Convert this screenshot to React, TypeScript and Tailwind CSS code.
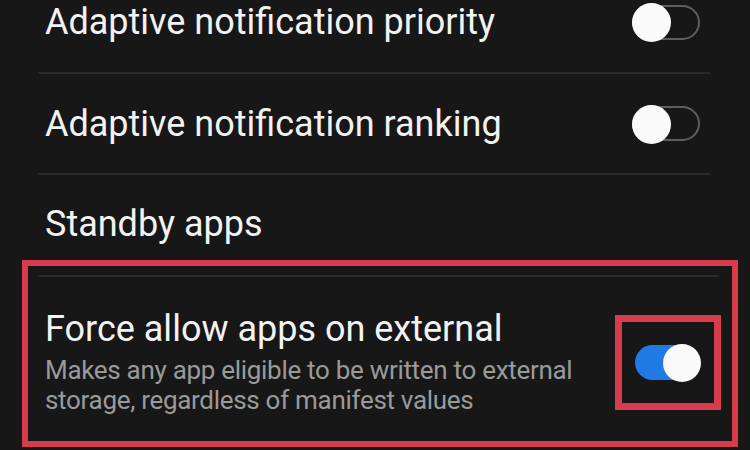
import React from 'react';

const Toggle: React.FC<{ on?: boolean }> = ({ on }) =>
  on ? (
    <div className="relative w-[66px] h-[38px] flex items-center">
      <div className="h-[35px] w-[56px] rounded-full bg-[#1f7ae6]" />
      <div className="absolute right-0 top-0 h-[38px] w-[38px] rounded-full bg-[#fafafa]" />
    </div>
  ) : (
    <div className="relative w-[68px] h-[38px] flex items-center">
      <div className="h-[35px] w-[68px] rounded-full border-2 border-[#5e5e5e]" />
      <div className="absolute left-0 top-0 h-[39px] w-[39px] rounded-full bg-[#fafafa]" />
    </div>
  );

const Divider: React.FC = () => <div className="h-[2px] bg-[#2a2a2a] ml-[38px] mr-[40px]" />;

export default function App() {
  const font = { fontFamily: 'Roboto, "Noto Sans", sans-serif' };
  return (
    <div className="w-[750px] h-[450px] overflow-hidden bg-[#171717] text-[#f2f2f2]" style={font}>
      <div className="flex flex-col -mt-[28px]">
        <div className="h-[100px] flex items-center justify-between pl-[45px] pr-[50px]">
          <span className="text-[36px]">Adaptive notification priority</span>
          <Toggle />
        </div>
        <Divider />
        <div className="h-[99px] flex items-center justify-between pl-[45px] pr-[50px]">
          <span className="text-[36px]">Adaptive notification ranking</span>
          <Toggle />
        </div>
        <Divider />
        <div className="h-[85px] flex items-center pl-[45px] pt-[12px]">
          <span className="text-[36px]">Standby apps</span>
        </div>
        <div className="ml-[22px] mr-[12px] h-[187px] border-[6px] border-[#d63c4c] flex flex-col">
          <div className="mt-[9px] h-[2px] bg-[#2a2a2a] ml-[10px] mr-[14px]" />
          <div className="flex items-start justify-between pl-[17px] pr-[11px] pt-[28px]">
            <div className="flex flex-col">
              <span className="text-[36px] leading-[48px]">Force allow apps on external</span>
              <span className="mt-[2px] text-[26px] leading-[30px] text-[#9a9a9a] tracking-[-0.3px]">
                Makes any app eligible to be written to external
                <br />
                storage, regardless of manifest values
              </span>
            </div>
            <div className="w-[106px] h-[95px] mt-[10px] border-[7px] border-[#d63c4c] flex items-center justify-center">
              <Toggle on />
            </div>
          </div>
        </div>
      </div>
    </div>
  );
}
